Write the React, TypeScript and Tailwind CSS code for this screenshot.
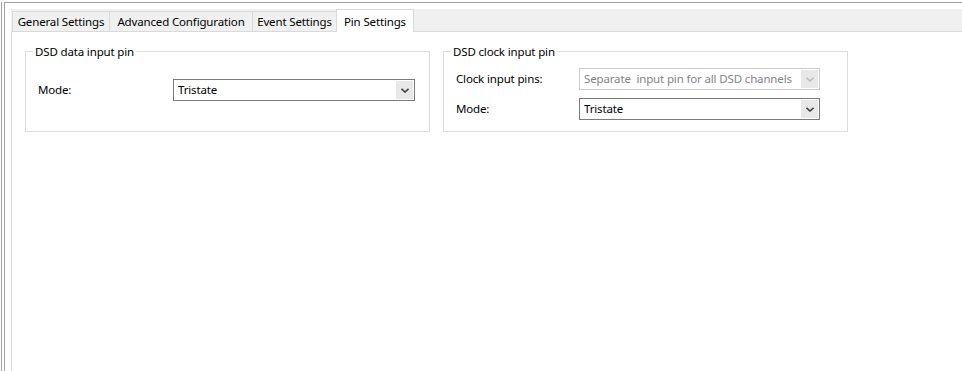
import React from "react";

function Chevron({ disabled }: { disabled?: boolean }) {
  return (
    <svg width="8" height="5" viewBox="0 0 8 5" className="block">
      <path
        d="M0.5 0.8 L4 4 L7.5 0.8"
        fill="none"
        stroke={disabled ? "#bcbcbc" : "#404040"}
        strokeWidth="1.6"
      />
    </svg>
  );
}

function Select({ value, disabled, width }: { value: string; disabled?: boolean; width: string }) {
  return (
    <div
      className={
        "flex h-[22px] items-stretch border " +
        width +
        (disabled ? " border-[#cccccc] bg-white text-[#838383]" : " border-[#7a7a7a] bg-white text-black")
      }
    >
      <div className="flex flex-1 items-center overflow-hidden whitespace-pre pl-[4px] leading-none">{value}</div>
      <div className="m-px flex w-[17px] items-center justify-center bg-[#e8e8e8]">
        <Chevron disabled={disabled} />
      </div>
    </div>
  );
}

function Tab({ label, active, width }: { label: string; active?: boolean; width: string }) {
  if (active) {
    return (
      <div
        className={
          "relative z-10 -mb-px flex h-[23px] items-start justify-center whitespace-nowrap border-x border-t border-[#d9d9d9] bg-white pt-[3px] " +
          width
        }
      >
        {label}
      </div>
    );
  }
  return (
    <div
      className={
        "flex h-[20px] items-center justify-center whitespace-nowrap border-t border-l border-[#d9d9d9] bg-[#f0f0f0] " +
        width
      }
    >
      {label}
    </div>
  );
}

export default function App() {
  return (
    <div
      className="h-[371px] w-[962px] overflow-hidden bg-white text-[11.5px] tracking-[-0.15px] text-black"
      style={{ fontFamily: '"Noto Sans", "Open Sans", sans-serif' }}
    >
      <div className="ml-px h-full border-l border-[#a0a0a0]">
        <div className="ml-[2px] mt-[2px] h-full border-l border-t border-[#a0a0a0] pt-[6px] pl-[6px]">
          {/* tab strip */}
          <div className="flex h-[23px] items-end border-b border-[#d9d9d9] bg-[#f0f0f0] pl-px">
            <Tab label="General Settings" width="w-[97px]" />
            <Tab label="Advanced Configuration" width="w-[143px]" />
            <Tab label="Event Settings" width="w-[84px]" />
            <Tab label="Pin Settings" active width="w-[78px]" />
          </div>
          {/* content */}
          <div className="h-full border-l border-[#d9d9d9] pl-[13px] pt-[12px]">
            <div className="flex gap-[13px]">
              <fieldset className="h-[88px] w-[405px] border border-[#dcdcdc] px-0">
                <legend className="ml-[7px] px-[2px] leading-[15px]">DSD data input pin</legend>
                <div className="mt-[20px] flex items-center pl-[12px]">
                  <div className="w-[135px]">Mode:</div>
                  <Select value="Tristate" width="w-[242px]" />
                </div>
              </fieldset>
              <fieldset className="h-[88px] w-[405px] border border-[#dcdcdc] px-0">
                <legend className="ml-[7px] px-[2px] leading-[15px]">DSD clock input pin</legend>
                <div className="mt-[9px] flex flex-col gap-[8px] pl-[12px]">
                  <div className="flex items-center">
                    <div className="w-[123px]">Clock input pins:</div>
                    <Select value="Separate  input pin for all DSD channels" disabled width="w-[241px]" />
                  </div>
                  <div className="flex items-center">
                    <div className="w-[123px]">Mode:</div>
                    <Select value="Tristate" width="w-[241px]" />
                  </div>
                </div>
              </fieldset>
            </div>
          </div>
        </div>
      </div>
    </div>
  );
}
